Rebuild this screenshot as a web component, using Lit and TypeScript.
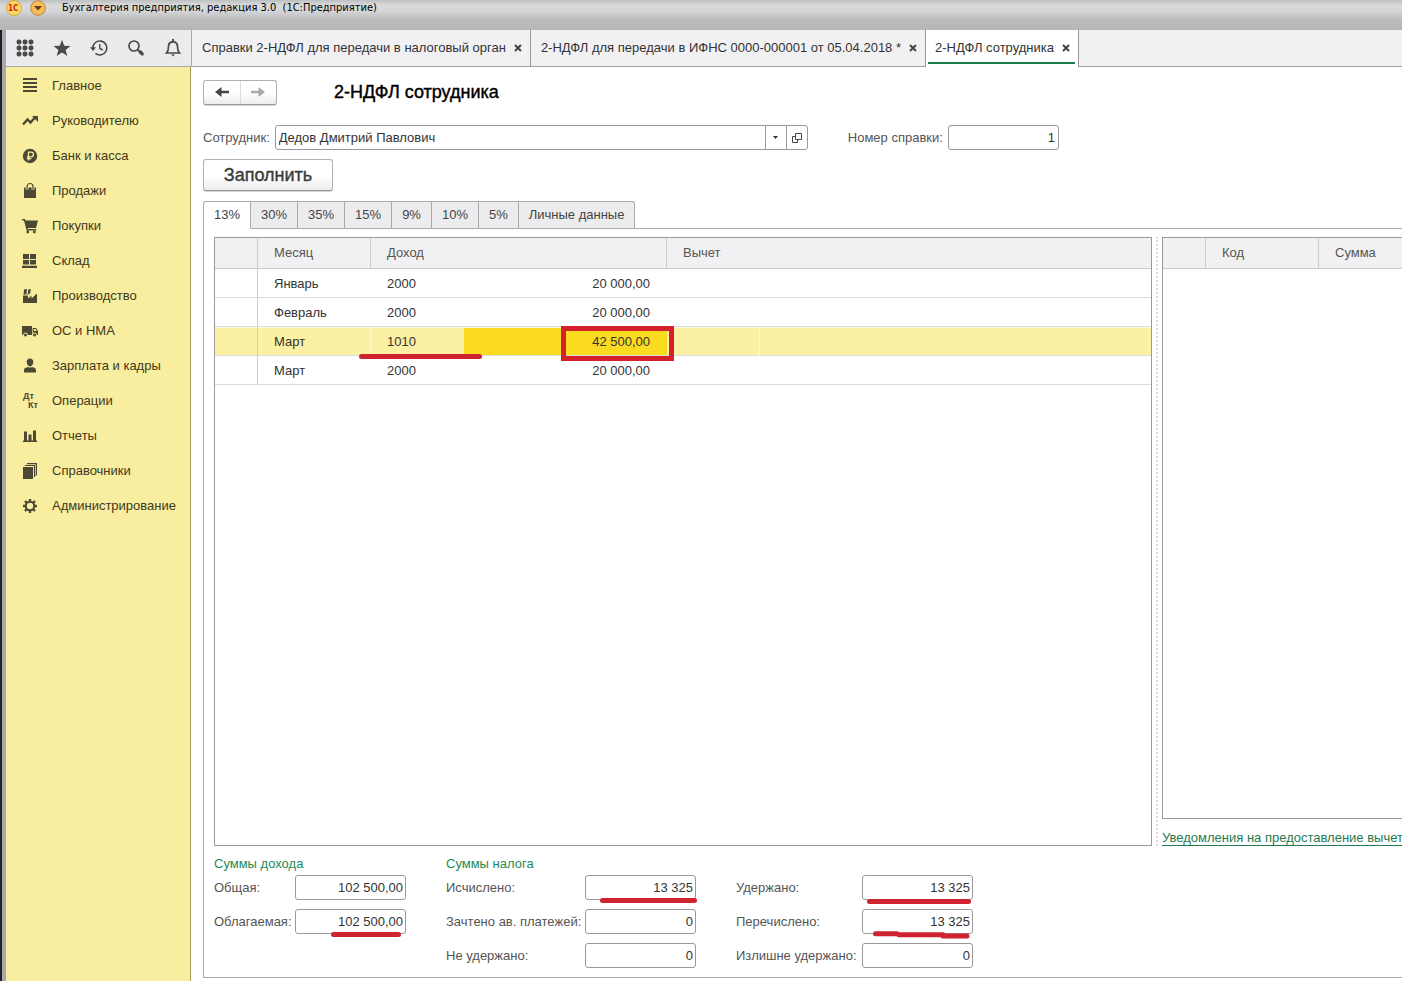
import { LitElement, html, css, svg, nothing } from "lit";
import { customElement, state } from "lit/decorators.js";
import { classMap } from "lit/directives/class-map.js";

const sections = [
  { name: "Главное", icon: svg`<path d="M1 0h14v2H1zM1 4h14v2H1zM1 8h14v2H1zM1 12h14v2H1z"/>` },
  { name: "Руководителю", icon: svg`<path d="M1 11.500 5.500 6.500l3 3L13 4.500" fill="none" stroke="currentColor" stroke-width="2.400"/><path d="M10 3H16v6z"/>` },
  { name: "Банк и касса", icon: svg`<circle cx="8" cy="8" r="7.200"/><path d="M6.500 12.500V4.200h2.700a2.300 2.300 0 0 1 0 4.600H4.800M4.800 10.700h4.500" fill="none" stroke="#f8eda0" stroke-width="1.300"/>` },
  { name: "Продажи", icon: svg`<path d="M2 4.500h12V15H2z"/><path d="M5 7V3.500a3 3 0 0 1 6 0V7" fill="none" stroke="#f8eda0" stroke-width="2.800"/><path d="M5 7V3.500a3 3 0 0 1 6 0V7" fill="none" stroke="currentColor" stroke-width="1.200"/>` },
  { name: "Покупки", icon: svg`<path d="M0 1h3l.6 1.500H16L14 10H5.500l.4 1h8.300v1.500H4.600L2 2.500H0z"/><circle cx="5.800" cy="14" r="1.400"/><circle cx="12.300" cy="14" r="1.400"/>` },
  { name: "Склад", icon: svg`<path d="M1 1h6v5H1zM8 1h6v5H8zM1 7h6v4.500H1zM8 7h6v4.500H8zM0 12.800h15V15H0z"/>` },
  { name: "Производство", icon: svg`<path d="M1 15V7.500h5V10.500l3.500-3v3L15 5.500V15zM2 1.500l3-.5-.5 5.500H1.500zM6.200 1.500l2.600-.5-.6 4.200-2.500 1.800z"/>` },
  { name: "ОС и НМА", icon: svg`<path d="M0 3h10v9H0zM10.700 5H14l2 3v4h-5.300z"/><path d="M11.800 6h1.700l1.200 2h-2.900z" fill="#f8eda0"/><circle cx="3.500" cy="12" r="2" stroke="#f8eda0"/><circle cx="12.500" cy="12" r="2" stroke="#f8eda0"/>` },
  { name: "Зарплата и кадры", icon: svg`<path d="M8 .5c2 0 3.300 1.400 3.300 3.500S9.900 8.500 8 8.500 4.700 6.100 4.700 4 6 .5 8 .5zM2 14.500V12C2 10 4 9.700 6 9c1 .8 3 .8 4 0 2 .7 4 1 4 3v2.500z"/>` },
  { name: "Операции", icon: svg`<text x="1" y="6" font-size="9" font-weight="700">Дт</text><text x="6" y="15" font-size="9" font-weight="700">Кт</text>` },
  { name: "Отчеты", icon: svg`<path d="M1 12.500h14V14H1zM2 3.500h3v9.500H2zM6.500 6.500h3V13h-3zM11 2.500h3V13h-3z"/>` },
  { name: "Справочники", icon: svg`<path d="M1 4h10v12H1z"/><path d="M3 2.500h9.500V14M5 .6h9.400V12.500" fill="none" stroke="currentColor" stroke-width="1.200"/>` },
  { name: "Администрирование", icon: svg`<circle cx="8" cy="8" r="4.200" fill="none" stroke="currentColor" stroke-width="2"/><g stroke="currentColor" stroke-width="2.400"><path d="M8 1v2.500M8 12.500V15M1 8h2.500M12.500 8H15M3 3l1.800 1.800M11.200 11.200 13 13M13 3l-1.800 1.800M4.800 11.200 3 13"/></g>` },
];

const tools = [
  { name: "Меню", icon: svg`${[3, 9, 15].map((y) => [3, 9, 15].map((x) => svg`<rect x=${x - 2.4} y=${y - 2.4} width="4.800" height="4.800" rx="1.800"/>`))}` },
  { name: "Избранное", icon: svg`<path d="m9 .8 2.200 5.900 6.300.3-4.900 3.900 1.700 6.200L9 13.600l-5.300 3.500 1.700-6.200L.5 7l6.300-.3z"/>` },
  { name: "История", icon: svg`<path d="M2.800 9a7 7 0 1 1 2.600 5.400" fill="none" stroke="currentColor" stroke-width="1.600"/><path d="M0 8.300h6L3 12z"/><path d="M9.800 5v4.500l3 1.500" fill="none" stroke="currentColor" stroke-width="1.400"/>` },
  { name: "Поиск", icon: svg`<circle cx="7" cy="7" r="5" fill="none" stroke="currentColor" stroke-width="1.700"/><path d="m10.500 10.500 1.500 1.500" stroke="currentColor" stroke-width="1.600"/><path d="m13 12.700 2.200 2.200" stroke="currentColor" stroke-width="3.400" stroke-linecap="round"/>` },
  { name: "Уведомления", icon: svg`<path d="M2.500 14c2-2 2-3.500 2-6.500 0-3 2-4.700 4.500-4.700s4.500 1.700 4.500 4.700c0 3 0 4.500 2 6.500z" fill="none" stroke="currentColor" stroke-width="1.700"/><path d="M8 0h2v3H8zM7 15.500h4L9 17.500z"/>` },
];

const docs = [
  "Справки 2-НДФЛ для передачи в налоговый орган",
  "2-НДФЛ для передачи в ИФНС 0000-000001 от 05.04.2018 *",
  "2-НДФЛ сотрудника",
];

const rates = ["13%", "30%", "35%", "15%", "9%", "10%", "5%", "Личные данные"];

const incomes = [
  { month: "Январь", code: "2000", sum: "20 000,00" },
  { month: "Февраль", code: "2000", sum: "20 000,00" },
  { month: "Март", code: "1010", sum: "42 500,00", current: true },
  { month: "Март", code: "2000", sum: "20 000,00" },
];

const totals = [
  {
    title: "Суммы дохода",
    kind: "income",
    fields: [
      { id: "total", label: "Общая:", value: "102 500,00", mark: "" },
      { id: "taxable", label: "Облагаемая:", value: "102 500,00", mark: "short" },
    ],
  },
  {
    title: "Суммы налога",
    kind: "tax",
    fields: [
      { id: "computed", label: "Исчислено:", value: "13 325", mark: "late" },
      { id: "advance", label: "Зачтено ав. платежей:", value: "0", mark: "" },
      { id: "unheld", label: "Не удержано:", value: "0", mark: "" },
    ],
  },
  {
    title: "",
    kind: "held",
    fields: [
      { id: "withheld", label: "Удержано:", value: "13 325", mark: "wide" },
      { id: "paid", label: "Перечислено:", value: "13 325", mark: "rough" },
      { id: "excess", label: "Излишне удержано:", value: "0", mark: "" },
    ],
  },
];

@customElement("app-root")
export class AppRoot extends LitElement {
  @state() private rate = 0;

  static styles = css`
    :host {
      display: flex;
      flex-direction: column;
      box-sizing: border-box;
      min-height: 100vh;
      overflow: hidden;
      background: #fff;
      color: #333;
      font: 13px/16px "Liberation Sans", Arial, sans-serif;
    }
    *, *::before, *::after { box-sizing: border-box; }
    button, input { font: inherit; color: inherit; margin: 0; }
    button { padding: 0; border: 0; background: none; cursor: pointer; }
    svg { display: block; fill: currentColor; overflow: visible; }

    .titlebar {
      display: flex;
      align-items: flex-start;
      gap: 8px;
      height: 30px;
      padding-left: 6px;
      background: linear-gradient(#bebfc1 0, #d9d9da 5px, #d6d6d7 11px, #b9babc 20px, #b5b6b8 30px);
      color: #000;
      font: 11px/16px "DejaVu Sans Condensed", Tahoma, sans-serif;
    }
    .caption { margin: 0 0 0 8px; font: inherit; white-space: pre; }
    .window {
      flex: 1;
      display: grid;
      grid-template: 37px 1fr / 185px minmax(0, 1fr);
      border-left: 2px solid #222;
      box-shadow: inset 4px 0 #a9a8ac;
      padding-left: 4px;
    }
    .tools {
      display: grid;
      grid-template-columns: repeat(5, 1fr);
      background: #ebebed;
      border-bottom: 1px solid #a8a8a8;
      color: #4a4a4a;
    }
    .tool { display: grid; place-items: center; }
    .docs {
      display: flex;
      min-width: 0;
      background: #f1f1f3;
      border-left: 1px solid #aaa;
      border-bottom: 1px solid #a0a0a0;
    }
    .doc {
      display: flex;
      align-items: center;
      gap: 4px;
      flex: none;
      padding: 0 4px 0 10px;
      border-right: 1px solid #999;
      white-space: nowrap;
      position: relative;
    }
    .doc.active { background: #fff; margin-bottom: -1px; padding: 0 4px 1px 9px; }
    .doc.active::after {
      content: "";
      position: absolute;
      left: 2px;
      right: 3px;
      bottom: 3px;
      height: 2px;
      background: #1f7a4c;
    }
    .close { width: 16px; height: 16px; display: grid; place-items: center; color: #444; }

    .sections { background: #f9eda0; border-right: 1px solid #a79c5c; padding-top: 1px; }
    .section {
      display: flex;
      align-items: center;
      gap: 14px;
      height: 35px;
      padding-left: 16px;
      color: #40391c;
      text-decoration: none;
      white-space: nowrap;
    }
    .section svg { color: #4b4833; }

    .page { display: flex; flex-direction: column; padding: 12px 0 3px 12px; min-width: 0; }
    .head { display: flex; align-items: center; gap: 57px; height: 26px; }
    .title { margin: 0; font-size: 18px; line-height: 24px; font-weight: 400; color: #000; -webkit-text-stroke: 0.4px; }
    .nav, .fill {
      border: 1px solid #b0b0b0;
      border-bottom-color: #999;
      border-radius: 3px;
      background: linear-gradient(#fff 50%, #ededed);
      box-shadow: 0 1px #d4d4d4;
    }
    .nav { display: flex; width: 74px; height: 25px; }
    .nav button { flex: 1; display: grid; place-items: center; color: #444; }
    .nav button + button { border-left: 1px solid #ddd; color: #aaa; }
    .params { display: flex; align-items: center; gap: 40px; margin-top: 20px; height: 25px; }
    .param { display: flex; align-items: center; gap: 5px; }
    .param label, .total label { color: #555; white-space: nowrap; }
    .combo { display: flex; width: 533px; height: 25px; border: 1px solid #999; border-radius: 3px; }
    .combo input { flex: 1; min-width: 0; border: 0; padding: 0 3px; background: none; }
    .combo button { width: 21px; border-left: 1px solid #999; display: grid; place-items: center; }
    .box {
      width: 111px;
      height: 25px;
      border: 1px solid #999;
      border-radius: 3px;
      padding: 0 3px;
      background: #fff;
      text-align: right;
    }
    .fill { align-self: flex-start; width: 130px; height: 32px; margin-top: 9px; font-size: 18px; color: #3c3c3c; -webkit-text-stroke: 0.4px; }

    .rates { display: flex; margin-top: 10px; z-index: 1; }
    .rate {
      height: 28px;
      padding: 0 10px;
      border: 1px solid #aaa;
      border-left-width: 0;
      background: #ececee;
      color: #444;
      white-space: nowrap;
    }
    .rate:first-child { border-left-width: 1px; border-top-left-radius: 3px; }
    .rate:last-child { border-top-right-radius: 3px; }
    .rate.on { background: #fff; border-bottom-color: #fff; }
    .panel {
      flex: 1;
      display: flex;
      flex-direction: column;
      margin-top: -1px;
      padding: 8px 0 9px 10px;
      border: 1px solid #aaa;
      border-right: 0;
      min-width: 0;
    }
    .split { flex: 1; display: flex; min-width: 0; }
    .frame { flex: 1; border: 1px solid #999; min-width: 0; }
    .divider { width: 10px; display: flex; justify-content: center; flex: none; }
    .divider::before { content: ""; border-left: 2px dotted #dcdce0; }
    .side { flex: none; width: 240px; display: flex; flex-direction: column; }
    .side .frame { border-right: 0; }
    .link { display: block; margin-top: 11px; height: 16px; color: #1f7a52; white-space: nowrap; text-underline-offset: 3px; }

    table { width: 100%; table-layout: fixed; border-collapse: separate; border-spacing: 0; }
    th {
      height: 31px;
      padding: 0 16px;
      background: #f1f1f3;
      border-bottom: 1px solid #ccc;
      border-right: 1px solid #ccc;
      color: #555;
      font-weight: 400;
      text-align: left;
    }
    th:last-child { border-right: 0; }
    td { height: 29px; padding: 2px 16px 0; border-bottom: 1px solid #ddd; position: relative; }
    td:first-child { border-right: 1px solid #ccc; }
    .sum { text-align: right; padding-right: 17px; }
    .current td { background: #fcf0a3; box-shadow: inset 0 1px #fffbe0; }
    .current td:nth-child(2), .current td:nth-child(5) { border-right: 1px solid #fff8d0; }
    .current .sum { background: #fadb1f; }
    .c-mark { width: 43px; }
    .c-month { width: 113px; }
    .c-code { width: 93px; }
    .c-sum { width: 203px; }
    .ring {
      position: absolute;
      z-index: 2;
      right: -7px;
      top: -1px;
      width: 113px;
      height: 35px;
      border: 5px solid #d4202a;
    }
    .stroke { position: absolute; z-index: 2; height: 5px; border-radius: 3px; background: #cf2430; }
    .stroke.code { left: -12px; width: 123px; top: 27px; }
    .stroke.short { left: 36px; right: 5px; bottom: -3px; }
    .stroke.late { left: 15px; right: -1px; bottom: -3px; }
    .stroke.wide { left: 5px; right: 2px; bottom: -4px; }
    .rough { position: absolute; left: 11px; bottom: -5px; }

    .totals { display: flex; gap: 40px; margin-top: 10px; }
    .group { display: flex; flex-direction: column; gap: 9px; }
    .subtitle { margin: 0 0 -6px; height: 16px; font: inherit; color: #1f8a58; }
    .total { display: grid; align-items: center; }
    .income .total { grid-template-columns: 81px 111px; }
    .tax .total { grid-template-columns: 139px 111px; }
    .held .total { grid-template-columns: 126px 111px; }
    .cell { position: relative; display: flex; }
    .cell .box { padding-right: 2px; }
  `;

  private mark(kind: string) {
    if (!kind) return nothing;
    if (kind === "rough")
      return html`<svg class="rough" width="97" height="8" viewBox="0 0 97 8" aria-hidden="true">
        <path d="M2.500 2.800H24M26 3.800h44M70 5h24" fill="none" stroke="#cf2430" stroke-width="5" stroke-linecap="round" />
      </svg>`;
    return html`<span class="stroke ${kind}"></span>`;
  }

  private arrow(back: boolean) {
    return html`<svg width="14" height="10" viewBox="0 0 14 10">
      ${back
        ? svg`<path d="M0 5 6.500 0v3.700H14v2.600H6.500V10z"/>`
        : svg`<path d="M14 5 7.500 0v3.700H0v2.600h7.500V10z"/>`}
    </svg>`;
  }

  render() {
    return html`
      <header class="titlebar">
        <svg width="16" height="16" viewBox="0 0 16 16" aria-hidden="true">
          <circle cx="8" cy="8" r="7.500" fill="#fbd75c" stroke="#d9a648" />
          <text x="2" y="11" font-size="8" font-weight="700" fill="#c4281c">1С</text>
        </svg>
        <svg width="16" height="16" viewBox="0 0 16 16" aria-hidden="true">
          <circle cx="8" cy="8" r="7.300" fill="#f6bd5a" stroke="#b98442" />
          <path d="M4 6h8l-4 4.500z" fill="#6b3d12" />
        </svg>
        <h1 class="caption">Бухгалтерия предприятия, редакция 3.0  (1С:Предприятие)</h1>
      </header>
      <div class="window">
        <div class="tools">
          ${tools.map((t) => html`<button class="tool" aria-label=${t.name}>
            <svg width="18" height="18" viewBox="0 0 18 18">${t.icon}</svg>
          </button>`)}
        </div>
        <div class="docs">
          ${docs.map((d, i) => html`<div class=${classMap({ doc: true, active: i === 2 })}>
            <button>${d}</button>
            <button class="close" aria-label="Закрыть">
              <svg width="8" height="8" viewBox="0 0 8 8"><path d="m1 1 6 6M7 1 1 7" stroke="currentColor" stroke-width="2" /></svg>
            </button>
          </div>`)}
        </div>
        <nav class="sections">
          ${sections.map((s) => html`<a class="section" href="#">
            <svg width="16" height="16" viewBox="0 0 16 16" aria-hidden="true">${s.icon}</svg>${s.name}
          </a>`)}
        </nav>
        <main class="page">
          <div class="head">
            <div class="nav">
              <button aria-label="Назад">${this.arrow(true)}</button>
              <button aria-label="Вперед">${this.arrow(false)}</button>
            </div>
            <h2 class="title">2-НДФЛ сотрудника</h2>
          </div>
          <div class="params">
            <div class="param">
              <label for="employee">Сотрудник:</label>
              <div class="combo">
                <input id="employee" type="text" .value=${"Дедов Дмитрий Павлович"} />
                <button aria-label="Выбрать"><svg width="5" height="3" viewBox="0 0 5 3"><path d="M0 0h5L2.500 3z" /></svg></button>
                <button aria-label="Открыть">
                  <svg width="10" height="10" viewBox="0 0 10 10"><path d="M3.500.5h6v6h-6zM3.500 3.500h-3v6h5v-3" fill="none" stroke="#444" /></svg>
                </button>
              </div>
            </div>
            <div class="param">
              <label for="number">Номер справки:</label>
              <input class="box" id="number" type="text" .value=${"1"} />
            </div>
          </div>
          <button class="fill">Заполнить</button>
          <div class="rates" role="tablist">
            ${rates.map((r, i) => html`<button
              role="tab"
              aria-selected=${i === this.rate ? "true" : "false"}
              class=${classMap({ rate: true, on: i === this.rate })}
              @click=${() => (this.rate = i)}
            >${r}</button>`)}
          </div>
          <section class="panel">
            <div class="split">
              <div class="frame">
                <table>
                  <colgroup>
                    <col class="c-mark" /><col class="c-month" /><col class="c-code" /><col class="c-sum" /><col class="c-code" /><col />
                  </colgroup>
                  <thead>
                    <tr><th></th><th>Месяц</th><th colspan="2">Доход</th><th colspan="2">Вычет</th></tr>
                  </thead>
                  <tbody>
                    ${incomes.map((r) => html`<tr class=${classMap({ current: !!r.current })}>
                      <td></td>
                      <td>${r.month}</td>
                      <td>${r.code}${r.current ? html`<span class="stroke code"></span>` : nothing}</td>
                      <td class="sum">${r.sum}${r.current ? html`<span class="ring"></span>` : nothing}</td>
                      <td></td>
                      <td></td>
                    </tr>`)}
                  </tbody>
                </table>
              </div>
              <div class="divider"></div>
              <div class="side">
                <div class="frame">
                  <table>
                    <colgroup><col class="c-mark" /><col class="c-month" /><col /></colgroup>
                    <thead><tr><th></th><th>Код</th><th>Сумма</th></tr></thead>
                  </table>
                </div>
                <a class="link" href="#">Уведомления на предоставление вычет</a>
              </div>
            </div>
            <div class="totals">
              ${totals.map((g) => html`<div class="group ${g.kind}">
                <h3 class="subtitle">${g.title}</h3>
                ${g.fields.map((f) => html`<div class="total">
                  <label for=${f.id}>${f.label}</label>
                  <div class="cell">
                    <input class="box" id=${f.id} type="text" .value=${f.value} />
                    ${this.mark(f.mark)}
                  </div>
                </div>`)}
              </div>`)}
            </div>
          </section>
        </main>
      </div>
    `;
  }
}
